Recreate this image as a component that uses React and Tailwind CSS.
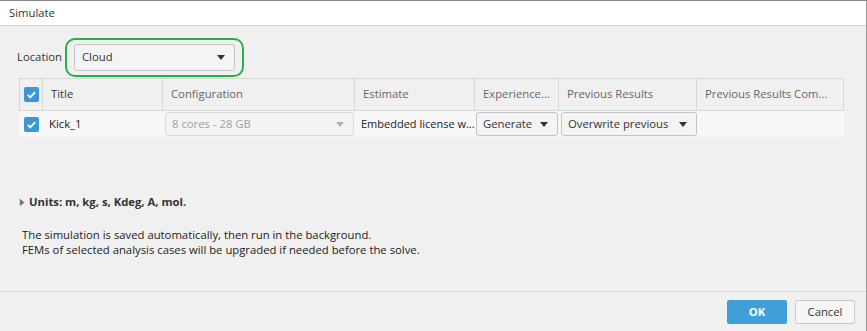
import React from "react";

const Caret = ({ className = "" }) => (
  <svg viewBox="0 0 8 5" className={`w-[8px] h-[5px] ${className}`} fill="currentColor">
    <path d="M0 0h8L4 5z" />
  </svg>
);

const Check = () => (
  <div className="w-[15px] h-[15px] bg-[#3a96d8] rounded-[2px] flex items-center justify-center">
    <svg viewBox="0 0 12 12" className="w-[11px] h-[11px]" fill="none" stroke="white" strokeWidth="2">
      <path d="M2 6.5l2.6 2.6L10 3.5" />
    </svg>
  </div>
);

const Select = ({ label, disabled, className = "" }) => (
  <div
    className={`flex items-center justify-between h-[24px] px-[6px] border rounded-[3px] ${
      disabled ? "border-[#dadada] text-[#a0a0a0] bg-[#f3f3f3]" : "border-[#c4c4c4] text-[#333] bg-[#f4f4f4]"
    } ${className}`}
  >
    <span className="whitespace-nowrap">{label}</span>
    <Caret className={disabled ? "text-[#b0b0b0] mr-[3px]" : "text-[#333] mr-[3px]"} />
  </div>
);

const columnas = [
  { titulo: "Title", ancho: "w-[120px]" },
  { titulo: "Configuration", ancho: "w-[192px]" },
  { titulo: "Estimate", ancho: "w-[120px]" },
  { titulo: "Experience...", ancho: "w-[84px]" },
  { titulo: "Previous Results", ancho: "w-[138px]" },
  { titulo: "Previous Results Com...", ancho: "w-[147px]" },
];

export default function App() {
  return (
    <div
      className="w-[867px] h-[331px] bg-[#f0f0f0] text-[11.3px] text-[#333] border-t border-t-[#8a8a8a] border-r border-r-[#9a9a9a] flex flex-col"
      style={{ fontFamily: '"Open Sans", "Noto Sans", sans-serif' }}
    >
      <div className="h-[25px] bg-white border-b border-[#d4d4d4] flex items-center pl-[9px] text-[#333]">
        Simulate
      </div>

      <div className="flex-1 flex flex-col pl-[19px]">
        <div className="flex items-center mt-[12px] h-[39px]">
          <span className="-ml-[2px] w-[48px]">Location</span>
          <div className="border-2 border-[#28b048] rounded-[10px] px-[7px] h-[39px] flex items-center">
            <Select label="Cloud" className="w-[161px] h-[27px] bg-[#f2f2f2] pl-[7px]" />
          </div>
        </div>

        <div className="mt-[1px] w-[825px]">
          <div className="flex h-[33px] border-t border-b border-[#d6d6d6]">
            <div className="w-[24px] border-l border-r border-[#d6d6d6] flex items-center justify-center">
              <Check />
            </div>
            {columnas.map((c, i) => (
              <div
                key={c.titulo}
                className={`${c.ancho} flex items-center px-[8px] border-r border-[#d6d6d6] whitespace-nowrap ${
                  i === 0 ? "text-[#333]" : "text-[#666]"
                }`}
              >
                {c.titulo}
              </div>
            ))}
          </div>
          <div className="flex h-[26px] bg-[#f7f7f7] items-center">
            <div className="w-[24px] flex items-center justify-center">
              <Check />
            </div>
            <div className="w-[120px] pl-[6px] text-[#222]">Kick_1</div>
            <div className="w-[192px] pl-[2px]">
              <Select label="8 cores - 28 GB" disabled className="w-[189px]" />
            </div>
            <div className="w-[120px] pl-[6px] text-[#222] whitespace-nowrap text-[11px]">Embedded license w...</div>
            <div className="w-[84px] pl-[1px]">
              <Select label="Generate" className="w-[82px]" />
            </div>
            <div className="w-[138px] pl-[2px]">
              <Select label="Overwrite previous" className="w-[136px]" />
            </div>
            <div className="w-[147px]" />
          </div>
        </div>

        <div className="flex items-center mt-[57px] font-bold text-[#333]">
          <Caret className="text-[#777] -rotate-90 mr-[3px] -ml-[1px]" />
          Units: m, kg, s, Kdeg, A, mol.
        </div>

        <div className="mt-[16px] pl-[3px] leading-[15px] text-[#222]">
          <div>The simulation is saved automatically, then run in the background.</div>
          <div>FEMs of selected analysis cases will be upgraded if needed before the solve.</div>
        </div>
      </div>

      <div className="h-[40px] border-t border-[#d4d4d4] flex items-start justify-end gap-[8px] pt-[8px] pr-[11px]">
        <button className="w-[60px] h-[24px] bg-[#3f9fd9] text-white font-bold rounded-[2px]">OK</button>
        <button className="w-[60px] h-[24px] bg-[#f6f6f6] border border-[#c8c8c8] rounded-[2px] text-[#333]">
          Cancel
        </button>
      </div>
    </div>
  );
}
